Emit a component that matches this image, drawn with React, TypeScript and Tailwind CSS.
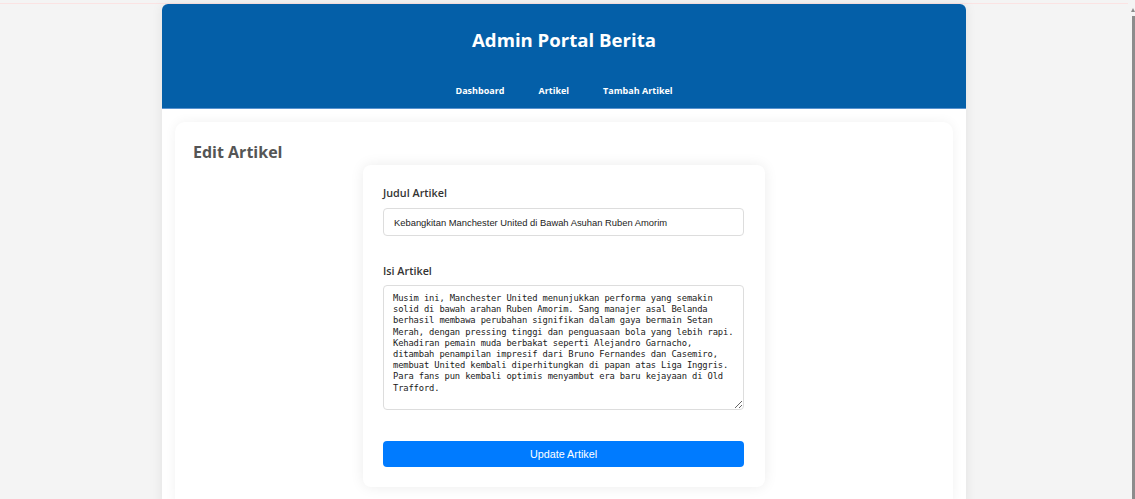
const artikel =
  'Musim ini, Manchester United menunjukkan performa yang semakin solid di bawah arahan Ruben Amorim. Sang manajer asal Belanda berhasil membawa perubahan signifikan dalam gaya bermain Setan Merah, dengan pressing tinggi dan penguasaan bola yang lebih rapi. Kehadiran pemain muda berbakat seperti Alejandro Garnacho, ditambah penampilan impresif dari Bruno Fernandes dan Casemiro, membuat United kembali diperhitungkan di papan atas Liga Inggris. Para fans pun kembali optimis menyambut era baru kejayaan di Old Trafford.'

const App = () => {
  return (
    <div className="flex h-screen overflow-hidden bg-[#f4f4f4] font-['Open_Sans',sans-serif]">
      {/* Halaman */}
      <div className="flex-1 pt-[3px]">
        <div className="h-px bg-[#fbe3e3]" />
        <div className="mx-auto w-[804px] rounded-t-[6px] bg-white shadow-[0_0_12px_rgba(0,0,0,0.08)]">
          {/* Header */}
          <header className="flex h-[105px] flex-col items-center rounded-t-[6px] border-b border-[#5a93cf] bg-[#045fa8] text-white">
            <h1 className="mt-[23px] text-[18.6px] font-bold leading-[26px]">Admin Portal Berita</h1>
            <nav className="mt-[32px] flex items-center gap-[34px] text-[9px] font-bold leading-[12px]">
              <a>Dashboard</a>
              <a>Artikel</a>
              <a>Tambah Artikel</a>
            </nav>
          </header>

          {/* Konten */}
          <div className="px-[13px] pt-[13px]">
            <div className="rounded-[10px] px-[18px] pt-[19px] pb-5 shadow-[0_0_12px_rgba(0,0,0,0.06)]">
              <h2 className="text-[16px] font-bold leading-[23px] text-[#555555]">Edit Artikel</h2>

              <form className="mx-auto mt-px w-[402px] rounded-[8px] bg-white py-5 pl-5 pr-[21px] shadow-[0_0_14px_rgba(0,0,0,0.08)]">
                <label className="mb-[7px] block text-[10.8px] font-semibold leading-[16px] text-[#333333]">
                  Judul Artikel
                </label>
                <input
                  type="text"
                  defaultValue="Kebangkitan Manchester United di Bawah Asuhan Ruben Amorim"
                  className="block h-[28px] w-full rounded-[4px] border border-[#dddddd] px-[10px] font-['Liberation_Sans',Arial,sans-serif] text-[9.4px] text-[#222222] outline-none"
                />

                <label className="mt-[27px] mb-[6px] block text-[10.8px] font-semibold leading-[16px] text-[#333333]">
                  Isi Artikel
                </label>
                <textarea
                  defaultValue={artikel}
                  className="block h-[125px] w-full resize-y rounded-[4px] border border-[#dddddd] px-[9px] pt-[7px] font-['DejaVu_Sans_Mono',monospace] text-[8.8px] leading-[11.2px] tracking-[-0.14px] text-[#1a1a1a] outline-none"
                />

                <button
                  type="button"
                  className="mt-[31px] block h-[26px] w-full rounded-[4px] bg-[#007bff] font-['Liberation_Sans',Arial,sans-serif] text-[10.8px] text-white"
                >
                  Update Artikel
                </button>
              </form>
            </div>
          </div>
        </div>
      </div>

      {/* Scrollbar */}
      <div className="flex w-[7px] flex-col items-end pt-[8px]">
        <div className="h-0 w-0 border-x-[2px] border-b-[4px] border-x-transparent border-b-[#8c8c8c]" />
        <div className="mt-[4px] w-[3px] flex-1 bg-[#8c8c8c]" />
      </div>
    </div>
  )
}

export default App
